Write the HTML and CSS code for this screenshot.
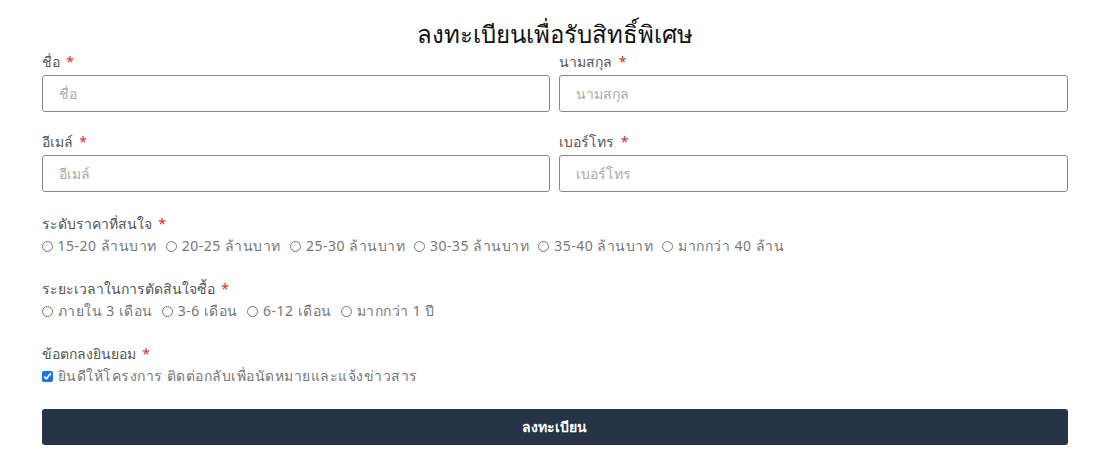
FILE: index.html
```html
<!DOCTYPE html>
<html lang="th">
<head>
  <meta charset="UTF-8">
  <title>ลงทะเบียนเพื่อรับสิทธิ์พิเศษ</title>
  <link rel="stylesheet" href="styles.css">
</head>
<body>
  <form class="regform">
    <h2 class="title">ลงทะเบียนเพื่อรับสิทธิ์พิเศษ</h2>
    <div class="grid">
      <div class="field">
        <label>ชื่อ <span class="req">*</span></label>
        <input type="text" placeholder="ชื่อ">
      </div>
      <div class="field">
        <label>นามสกุล <span class="req">*</span></label>
        <input type="text" placeholder="นามสกุล">
      </div>
      <div class="field">
        <label>อีเมล์ <span class="req">*</span></label>
        <input type="text" placeholder="อีเมล์">
      </div>
      <div class="field">
        <label>เบอร์โทร <span class="req">*</span></label>
        <input type="text" placeholder="เบอร์โทร">
      </div>
    </div>

    <div class="group">
      <label>ระดับราคาที่สนใจ <span class="req">*</span></label>
      <div class="options">
        <span class="opt"><input type="radio" name="price"> 15-20 ล้านบาท</span>
        <span class="opt"><input type="radio" name="price"> 20-25 ล้านบาท</span>
        <span class="opt"><input type="radio" name="price"> 25-30 ล้านบาท</span>
        <span class="opt"><input type="radio" name="price"> 30-35 ล้านบาท</span>
        <span class="opt"><input type="radio" name="price"> 35-40 ล้านบาท</span>
        <span class="opt"><input type="radio" name="price"> มากกว่า 40 ล้าน</span>
      </div>
    </div>

    <div class="group">
      <label>ระยะเวลาในการตัดสินใจซื้อ <span class="req">*</span></label>
      <div class="options">
        <span class="opt"><input type="radio" name="time"> ภายใน 3 เดือน</span>
        <span class="opt"><input type="radio" name="time"> 3-6 เดือน</span>
        <span class="opt"><input type="radio" name="time"> 6-12 เดือน</span>
        <span class="opt"><input type="radio" name="time"> มากกว่า 1 ปี</span>
      </div>
    </div>

    <div class="group">
      <label>ข้อตกลงยินยอม <span class="req">*</span></label>
      <div class="options">
        <span class="opt"><input type="checkbox" checked> ยินดีให้โครงการ ติดต่อกลับเพื่อนัดหมายและแจ้งข่าวสาร</span>
      </div>
    </div>

    <button type="button" class="submit">ลงทะเบียน</button>
  </form>
</body>
</html>
```

FILE: styles.css
```css
body { margin: 0; background: #fff; font-family: "Noto Sans", "DejaVu Sans", sans-serif; color: #555; }
.regform { width: 1026px; margin: 0 auto; padding-top: 16px; }
.title { margin: 0; text-align: center; font-size: 24px; font-weight: 500; color: #111; line-height: 36px; }
.grid { display: grid; grid-template-columns: 1fr 1fr; column-gap: 9px; margin-bottom: 2px; }
.field { display: flex; flex-direction: column; margin-bottom: 20px; }
label { font-size: 14px; line-height: 20px; color: #555; margin-bottom: 3px; }
.req { color: #d0312d; margin-left: 3px; }
input[type=text] { height: 37px; box-sizing: border-box; border: 1px solid #888; border-radius: 3px; padding: 0 16px; font: inherit; font-size: 14px; }
input::placeholder { color: #aaa; }
.group { margin-bottom: 23px; }
.group label { display: block; margin-bottom: 2px; }
.options { display: flex; flex-wrap: wrap; gap: 9px; font-size: 14px; color: #777; line-height: 20px; letter-spacing: 0.5px; }
.opt { display: inline-flex; align-items: center; gap: 5px; }
.opt input { margin: 0; }
.opt input[type=radio] { width: 11px; height: 11px; }
.opt input[type=checkbox] { width: 11px; height: 11px; accent-color: #1a73e8; }
.submit { display: block; width: 100%; height: 36px; margin-top: 12px; background: #263447; color: #fff; border: 0; border-radius: 3px; font: inherit; font-size: 14px; font-weight: bold; }
```
